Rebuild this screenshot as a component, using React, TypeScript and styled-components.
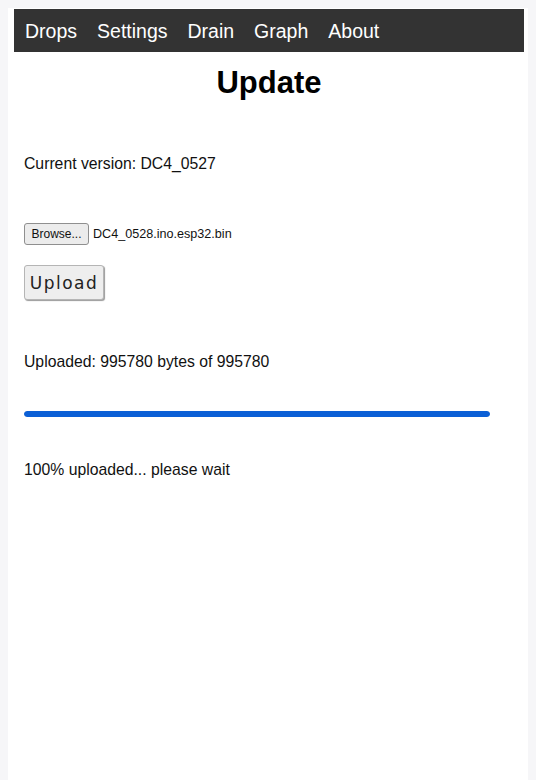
import styled, { createGlobalStyle } from "styled-components";

const GlobalStyle = createGlobalStyle`
  html, body {
    margin: 0;
    padding: 0;
    background: #f6f6f8;
    font-family: "Liberation Sans", Arial, sans-serif;
  }
`;

const Page = styled.div`
  margin: 8px 8px 0 8px;
  width: 520px;
  min-height: 772px;
  background: #ffffff;
  padding: 1px 4px 0 6px;
  box-sizing: border-box;
`;

const Nav = styled.nav`
  display: flex;
  align-items: center;
  height: 43px;
  background-color: #333333;
  padding-left: 1px;
`;

const NavItem = styled.a`
  color: #ffffff;
  font-size: 19.5px;
  text-decoration: none;
  padding: 0 10px;
  margin-top: 1px;
`;

const Title = styled.h1`
  margin: 12px 0 0;
  text-align: center;
  font-size: 31px;
  font-weight: bold;
  color: #000;
  line-height: 37px;
`;

const Content = styled.div`
  padding: 0 10px;
  display: flex;
  flex-direction: column;
  align-items: flex-start;
`;

const Line = styled.p<{ $top: number }>`
  margin: ${(p) => p.$top}px 0 0;
  font-size: 15.75px;
  line-height: 18px;
  color: #111;
`;

const FileRow = styled.div`
  display: flex;
  align-items: center;
  gap: 4px;
  margin-top: 50px;
`;

const BrowseButton = styled.button`
  height: 22px;
  width: 65px;
  padding: 0;
  font-family: "Liberation Sans", Arial, sans-serif;
  font-size: 12px;
  color: #111;
  background: #ececec;
  border: 1px solid #8f8f8f;
  border-radius: 3px;
`;

const FileName = styled.span`
  font-size: 12.6px;
  color: #111;
`;

const UploadButton = styled.button`
  margin-top: 20px;
  width: 80px;
  height: 35px;
  padding: 0;
  font-family: "DejaVu Sans", sans-serif;
  font-size: 17px;
  letter-spacing: 1.5px;
  color: #222;
  background: #eeeeee;
  border: 1px solid #b5b5b5;
  border-radius: 3px;
  box-shadow: 1px 1px 1px #9a9a9a;
`;

const Progress = styled.div`
  margin-top: 40px;
  width: 466px;
  height: 6px;
  border-radius: 3px;
  background: #e6e6e6;
  overflow: hidden;
`;

const ProgressFill = styled.div`
  height: 100%;
  background: #0b5fd6;
  border-radius: 3px;
`;

const navItems = ["Drops", "Settings", "Drain", "Graph", "About"];

export default function App() {
  const total = 995780;
  const uploaded = 995780;
  const pct = Math.round((uploaded / total) * 100);
  return (
    <>
      <GlobalStyle />
      <Page>
        <Nav>
          {navItems.map((item) => (
            <NavItem key={item} href="#">
              {item}
            </NavItem>
          ))}
        </Nav>
        <Title>Update</Title>
        <Content>
          <Line $top={54}>Current version: DC4_0527</Line>
          <FileRow>
            <BrowseButton>Browse...</BrowseButton>
            <FileName>DC4_0528.ino.esp32.bin</FileName>
          </FileRow>
          <UploadButton>Upload</UploadButton>
          <Line $top={53}>
            Uploaded: {uploaded} bytes of {total}
          </Line>
          <Progress>
            <ProgressFill style={{ width: `${pct}%` }} />
          </Progress>
          <Line $top={44}>{pct}% uploaded... please wait</Line>
        </Content>
      </Page>
    </>
  );
}
